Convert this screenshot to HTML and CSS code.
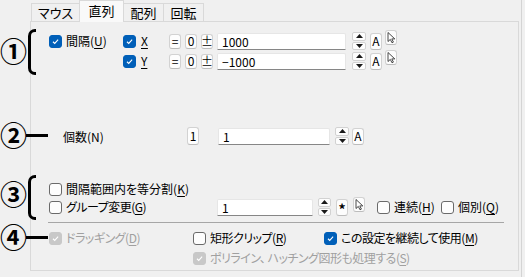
FILE: index.html
```html
<!DOCTYPE html>
<html lang="ja">
<head>
<meta charset="utf-8">
<link rel="stylesheet" href="styles.css">
</head>
<body>
<div class="window">
  <div class="tabs">
    <div class="tab t-mouse">マウス</div>
    <div class="tab t-series active">直列</div>
    <div class="tab t-array">配列</div>
    <div class="tab t-rot">回転</div>
  </div>
  <div class="panel">
    <div class="row r1">
      <label class="cell c-int"><span class="cb on"><svg viewBox="0 0 13 13"><path d="M3.5 6.8 L5.6 8.8 L9.6 4.4"/></svg></span><span class="lbl">間隔(<u>U</u>)</span></label>
      <label class="cell c-xy"><span class="cb on"><svg viewBox="0 0 13 13"><path d="M3.5 6.8 L5.6 8.8 L9.6 4.4"/></svg></span><span class="lbl xl"><u>X</u></span></label>
      <span class="btn sm">=</span>
      <span class="btn sm g4">0</span>
      <span class="btn sm g4">±</span>
      <span class="tb w129 g4">1000</span>
      <span class="spin g6"><span class="up"><svg viewBox="0 0 7 4"><path d="M3.5 0 L7 4 L0 4Z"/></svg></span><span class="dn"><svg viewBox="0 0 7 4"><path d="M0 0 L7 0 L3.5 4Z"/></svg></span></span>
      <span class="btn tall g4">A</span>
      <span class="btn ptr g3"><svg viewBox="0 0 10 13"><path d="M2 1.5 L2 10.5 L4.3 8.4 L6 11.8 L7.4 11.1 L5.8 7.9 L8.8 7.9 Z"/></svg></span>
    </div>
    <div class="row r2">
      <span class="cell c-int"></span>
      <label class="cell c-xy"><span class="cb on"><svg viewBox="0 0 13 13"><path d="M3.5 6.8 L5.6 8.8 L9.6 4.4"/></svg></span><span class="lbl xl"><u>Y</u></span></label>
      <span class="btn sm">=</span>
      <span class="btn sm g4">0</span>
      <span class="btn sm g4">±</span>
      <span class="tb w129 g4">−1000</span>
      <span class="spin g6"><span class="up"><svg viewBox="0 0 7 4"><path d="M3.5 0 L7 4 L0 4Z"/></svg></span><span class="dn"><svg viewBox="0 0 7 4"><path d="M0 0 L7 0 L3.5 4Z"/></svg></span></span>
      <span class="btn tall g4">A</span>
      <span class="btn ptr g3"><svg viewBox="0 0 10 13"><path d="M2 1.5 L2 10.5 L4.3 8.4 L6 11.8 L7.4 11.1 L5.8 7.9 L8.8 7.9 Z"/></svg></span>
    </div>
    <div class="row r3">
      <span class="cell c-count">個数(N)</span>
      <span class="btn one">1</span>
      <span class="tb w112 g19">1</span>
      <span class="spin g5"><span class="up"><svg viewBox="0 0 7 4"><path d="M3.5 0 L7 4 L0 4Z"/></svg></span><span class="dn"><svg viewBox="0 0 7 4"><path d="M0 0 L7 0 L3.5 4Z"/></svg></span></span>
      <span class="btn tall g3">A</span>
    </div>
    <div class="row r4">
      <label class="cell"><span class="cb"></span><span class="lbl">間隔範囲内を等分割(<u>K</u>)</span></label>
    </div>
    <div class="row r5">
      <label class="cell c-grp"><span class="cb"></span><span class="lbl kana">グループ変更(<u>G</u>)</span></label>
      <span class="tb w96">1</span>
      <span class="spin narrow g5"><span class="up"><svg viewBox="0 0 7 4"><path d="M3.5 0 L7 4 L0 4Z"/></svg></span><span class="dn"><svg viewBox="0 0 7 4"><path d="M0 0 L7 0 L3.5 4Z"/></svg></span></span>
      <span class="btn tall star g5">*</span>
      <span class="btn ptr g5"><svg viewBox="0 0 10 13"><path d="M2 1.5 L2 10.5 L4.3 8.4 L6 11.8 L7.4 11.1 L5.8 7.9 L8.8 7.9 Z"/></svg></span>
      <label class="cell c-cont g12"><span class="cb"></span><span class="lbl">連続(<u>H</u>)</span></label>
      <label class="cell"><span class="cb"></span><span class="lbl">個別(<u>Q</u>)</span></label>
    </div>
    <div class="sep"></div>
    <div class="row r6">
      <label class="cell c-drag dis"><span class="cb on"><svg viewBox="0 0 13 13"><path d="M3.5 6.8 L5.6 8.8 L9.6 4.4"/></svg></span><span class="lbl kana">ドラッギング(<u>D</u>)</span></label>
      <label class="cell c-clip"><span class="cb"></span><span class="lbl kana">矩形クリップ(<u>R</u>)</span></label>
      <label class="cell"><span class="cb on"><svg viewBox="0 0 13 13"><path d="M3.5 6.8 L5.6 8.8 L9.6 4.4"/></svg></span><span class="lbl kana">この設定を継続して使用(<u>M</u>)</span></label>
    </div>
    <div class="row r7">
      <label class="cell dis"><span class="cb on"><svg viewBox="0 0 13 13"><path d="M3.5 6.8 L5.6 8.8 L9.6 4.4"/></svg></span><span class="lbl kana">ポリライン、 ハッチング図形も処理する(<u>S</u>)</span></label>
    </div>
  </div>

  <div class="anno num n1">①</div>
  <div class="anno brk b1"></div>
  <div class="anno num n2">②</div>
  <div class="anno dash d2"></div>
  <div class="anno num n3">③</div>
  <div class="anno brk b3"></div>
  <div class="anno num n4">④</div>
  <div class="anno dash d4"></div>
</div>
</body>
</html>
```
FILE: styles.css
```css
* { box-sizing: border-box; }
html, body { margin: 0; padding: 0; }
body {
  background: #f0f0f0;
  font-family: "Noto Sans CJK JP", "Noto Sans", sans-serif;
  font-size: 12px;
  color: #000;
  font-feature-settings: "palt";
  width: 525px;
  height: 277px;
  overflow: hidden;
}
.window {
  position: relative;
  width: 522px;
  height: 277px;
  padding-left: 30px;
  border-right: 1px solid #d4d4d4;
}
.tabs {
  display: flex;
  align-items: flex-end;
  height: 21px;
  padding-left: 1px;
  position: relative;
  z-index: 2;
}
.tab {
  height: 18px;
  border: 1px solid #d9d9d9;
  border-bottom: none;
  margin-right: -1px;
  background: #f0f0f0;
  font-size: 13px;
  line-height: 17px;
  text-align: center;
}
.tab.active {
  height: 22px;
  margin-bottom: -1px;
  background: #f9f9f9;
  line-height: 20px;
  position: relative;
}
.t-mouse { width: 49px; }
.t-series { width: 45px; }
.t-array { width: 41px; }
.t-rot { width: 41px; }

.panel {
  width: 489px;
  height: 250px;
  border: 1px solid #d9d9d9;
  background: #f0f0f0;
  padding: 9px 0 0 18px;
}
.row {
  display: flex;
  align-items: center;
  height: 20px;
}
.r3 { margin-top: 55px; }
.r4 { margin-top: 34px; height: 18px; }
.r5 { height: 18px; }
.r6 { margin-top: 6px; height: 18px; }
.r7 { margin-top: 2px; height: 18px; padding-left: 144px; }

.cell { display: flex; align-items: center; flex: none; }
.c-int { width: 74px; }
.c-xy { width: 46px; }
.c-count { width: 138px; padding-left: 14px; }
.c-grp { width: 168px; }
.c-cont { width: 64px; }
.c-drag { width: 144px; }
.c-clip { width: 131px; }

.cb {
  width: 13px; height: 13px;
  flex: none;
  border: 1px solid #6a6a6a;
  border-radius: 3px;
  background: #fdfdfd;
  display: flex;
}
.cb.on { background: #005fb8; border-color: #005fb8; }
.cb svg { width: 11px; height: 11px; }
.cb svg path { fill: none; stroke: #fff; stroke-width: 1.3; }
.lbl { margin-left: 4px; white-space: nowrap; line-height: 14px; }
.lbl.kana { letter-spacing: -0.5px; }
.xl { margin-left: 5px; }
.dis .lbl { color: #a0a0a0; }
.dis .cb.on { background: #c8c8c8; border-color: #c8c8c8; }
u { text-underline-offset: 2px; }

.btn {
  flex: none;
  display: flex;
  align-items: center;
  justify-content: center;
  background: #fdfdfd;
  border: 1px solid #d2d2d2;
  border-bottom-color: #bcbcbc;
  border-radius: 3px;
  font-size: 12px;
  line-height: 1;
}
.btn.sm { width: 12px; height: 15px; }
.btn.tall { width: 12px; height: 17px; }
.btn.star { font-size: 14px; font-weight: 700; padding-top: 3px; }
.btn.one { width: 12px; height: 18px; }
.btn.ptr { width: 12px; height: 15px; align-self: flex-start; margin-top: -1px; }
.btn.ptr svg { width: 10px; height: 13px; }
.btn.ptr svg path { fill: #fff; stroke: #333; stroke-width: 0.9; stroke-linejoin: round; }

.tb {
  flex: none;
  height: 17px;
  background: #fff;
  border: 1px solid #e6e6e6;
  border-bottom: 1px solid #868686;
  border-radius: 2px 2px 0 0;
  padding-left: 4px;
  line-height: 15px;
  font-size: 12px;
}
.w129 { width: 129px; }
.w112 { width: 112px; }
.w96 { width: 96px; }

.spin {
  flex: none;
  width: 14px;
  height: 18px;
  display: flex;
  flex-direction: column;
  gap: 1px;
}
.spin.narrow { width: 13px; }
.spin .up, .spin .dn {
  flex: 1;
  display: flex;
  align-items: center;
  justify-content: center;
  background: #fdfdfd;
  border: 1px solid #d2d2d2;
  border-radius: 2px;
}
.spin svg { width: 7px; height: 4px; }
.spin svg path { fill: #1a1a1a; }

.g3 { margin-left: 3px; }
.g4 { margin-left: 4px; }
.g5 { margin-left: 5px; }
.g6 { margin-left: 6px; }
.g12 { margin-left: 12px; }
.g19 { margin-left: 19px; }

.sep {
  margin-top: 6px;
  margin-left: -1px;
  width: 456px;
  height: 1px;
  background: #a6a6a6;
}

/* annotation overlays */
.anno { position: absolute; }
.num {
  width: 26px;
  height: 28px;
  left: 0;
  font-size: 27px;
  line-height: 28px;
  font-weight: 700;
  text-align: center;
  font-feature-settings: normal;
}
.n1 { top: 37px; }
.n2 { top: 121px; }
.n3 { top: 180px; }
.n4 { top: 223px; }
.brk {
  left: 28px;
  width: 8px;
  border: 3px solid #000;
  border-right: none;
  border-radius: 7px 0 0 7px;
}
.b1 { top: 29px; height: 46px; }
.b3 { top: 175px; height: 45px; }
.dash {
  left: 26px;
  width: 22px;
  height: 3px;
  background: #000;
}
.d2 { top: 134px; }
.d4 { top: 236px; }
```
